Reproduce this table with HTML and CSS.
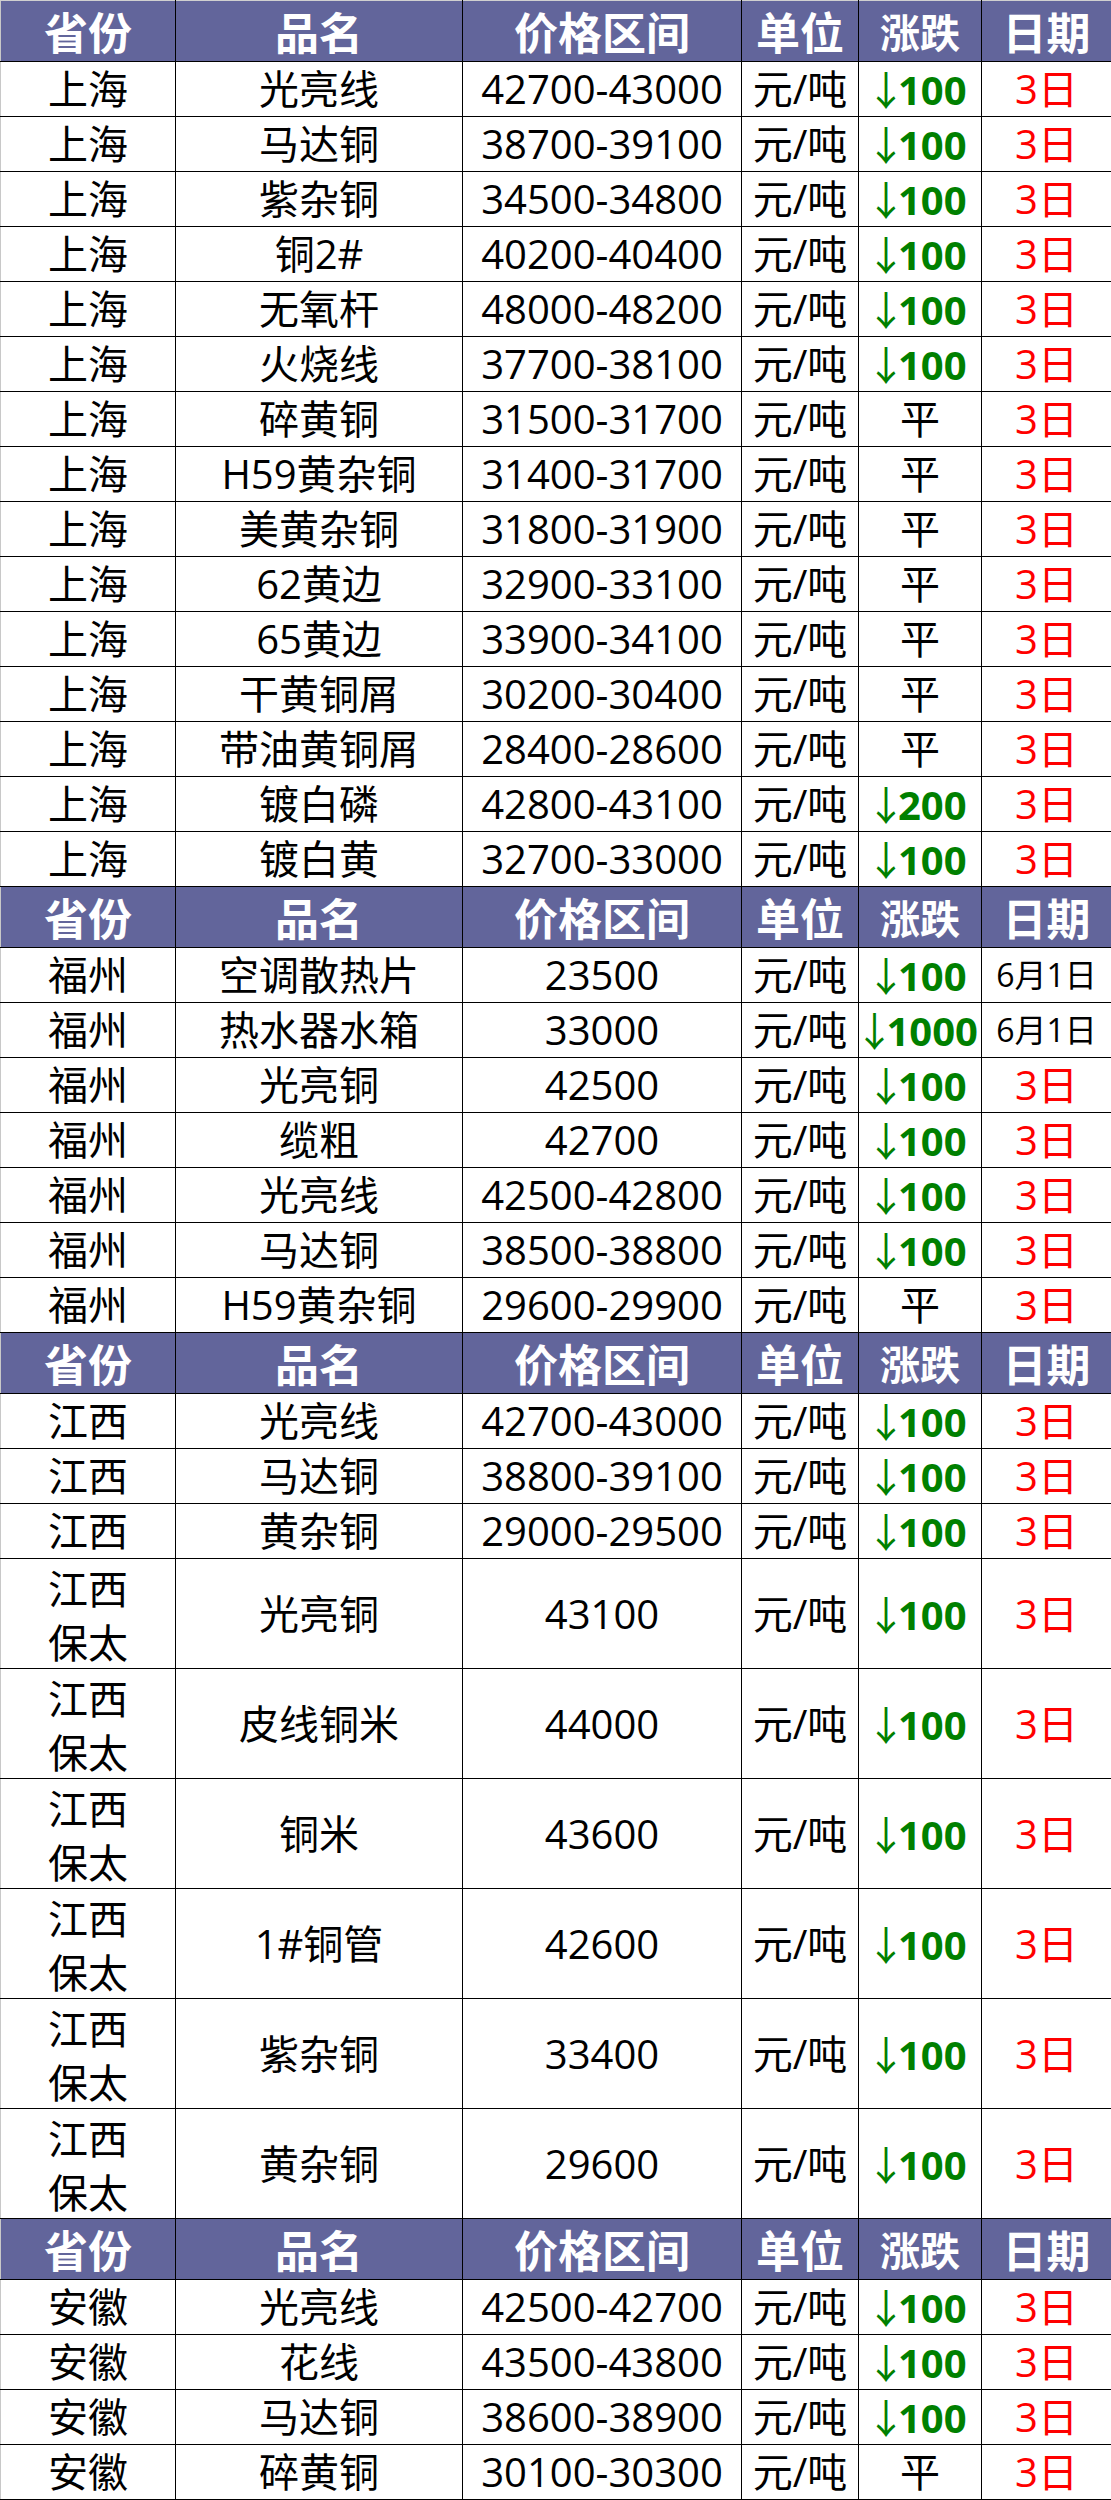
FILE: index.html
```html
<!DOCTYPE html>
<html lang="zh-CN">
<head>
<meta charset="utf-8">
<title>铜价</title>
<link rel="stylesheet" href="styles.css">
</head>
<body>
<table class="price-table">
  <colgroup>
    <col class="c-prov"><col class="c-name"><col class="c-price"><col class="c-unit"><col class="c-chg"><col class="c-date">
  </colgroup>
  <tbody>
    <tr class="head"><th>省份</th><th>品名</th><th>价格区间</th><th>单位</th><th class="h-chg">涨跌</th><th>日期</th></tr>
    <tr><td>上海</td><td>光亮线</td><td>42700-43000</td><td>元/吨</td><td class="down"><span class="arr">↓</span>100</td><td class="red">3日</td></tr>
    <tr><td>上海</td><td>马达铜</td><td>38700-39100</td><td>元/吨</td><td class="down"><span class="arr">↓</span>100</td><td class="red">3日</td></tr>
    <tr><td>上海</td><td>紫杂铜</td><td>34500-34800</td><td>元/吨</td><td class="down"><span class="arr">↓</span>100</td><td class="red">3日</td></tr>
    <tr><td>上海</td><td>铜2#</td><td>40200-40400</td><td>元/吨</td><td class="down"><span class="arr">↓</span>100</td><td class="red">3日</td></tr>
    <tr><td>上海</td><td>无氧杆</td><td>48000-48200</td><td>元/吨</td><td class="down"><span class="arr">↓</span>100</td><td class="red">3日</td></tr>
    <tr><td>上海</td><td>火烧线</td><td>37700-38100</td><td>元/吨</td><td class="down"><span class="arr">↓</span>100</td><td class="red">3日</td></tr>
    <tr><td>上海</td><td>碎黄铜</td><td>31500-31700</td><td>元/吨</td><td>平</td><td class="red">3日</td></tr>
    <tr><td>上海</td><td>H59黄杂铜</td><td>31400-31700</td><td>元/吨</td><td>平</td><td class="red">3日</td></tr>
    <tr><td>上海</td><td>美黄杂铜</td><td>31800-31900</td><td>元/吨</td><td>平</td><td class="red">3日</td></tr>
    <tr><td>上海</td><td>62黄边</td><td>32900-33100</td><td>元/吨</td><td>平</td><td class="red">3日</td></tr>
    <tr><td>上海</td><td>65黄边</td><td>33900-34100</td><td>元/吨</td><td>平</td><td class="red">3日</td></tr>
    <tr><td>上海</td><td>干黄铜屑</td><td>30200-30400</td><td>元/吨</td><td>平</td><td class="red">3日</td></tr>
    <tr><td>上海</td><td>带油黄铜屑</td><td>28400-28600</td><td>元/吨</td><td>平</td><td class="red">3日</td></tr>
    <tr><td>上海</td><td>镀白磷</td><td>42800-43100</td><td>元/吨</td><td class="down"><span class="arr">↓</span>200</td><td class="red">3日</td></tr>
    <tr><td>上海</td><td>镀白黄</td><td>32700-33000</td><td>元/吨</td><td class="down"><span class="arr">↓</span>100</td><td class="red">3日</td></tr>

    <tr class="head"><th>省份</th><th>品名</th><th>价格区间</th><th>单位</th><th class="h-chg">涨跌</th><th>日期</th></tr>
    <tr><td>福州</td><td>空调散热片</td><td>23500</td><td>元/吨</td><td class="down"><span class="arr">↓</span>100</td><td class="small-date">6月1日</td></tr>
    <tr><td>福州</td><td>热水器水箱</td><td>33000</td><td>元/吨</td><td class="down"><span class="arr">↓</span>1000</td><td class="small-date">6月1日</td></tr>
    <tr><td>福州</td><td>光亮铜</td><td>42500</td><td>元/吨</td><td class="down"><span class="arr">↓</span>100</td><td class="red">3日</td></tr>
    <tr><td>福州</td><td>缆粗</td><td>42700</td><td>元/吨</td><td class="down"><span class="arr">↓</span>100</td><td class="red">3日</td></tr>
    <tr><td>福州</td><td>光亮线</td><td>42500-42800</td><td>元/吨</td><td class="down"><span class="arr">↓</span>100</td><td class="red">3日</td></tr>
    <tr><td>福州</td><td>马达铜</td><td>38500-38800</td><td>元/吨</td><td class="down"><span class="arr">↓</span>100</td><td class="red">3日</td></tr>
    <tr><td>福州</td><td>H59黄杂铜</td><td>29600-29900</td><td>元/吨</td><td>平</td><td class="red">3日</td></tr>

    <tr class="head"><th>省份</th><th>品名</th><th>价格区间</th><th>单位</th><th class="h-chg">涨跌</th><th>日期</th></tr>
    <tr><td>江西</td><td>光亮线</td><td>42700-43000</td><td>元/吨</td><td class="down"><span class="arr">↓</span>100</td><td class="red">3日</td></tr>
    <tr><td>江西</td><td>马达铜</td><td>38800-39100</td><td>元/吨</td><td class="down"><span class="arr">↓</span>100</td><td class="red">3日</td></tr>
    <tr><td>江西</td><td>黄杂铜</td><td>29000-29500</td><td>元/吨</td><td class="down"><span class="arr">↓</span>100</td><td class="red">3日</td></tr>
    <tr class="tall"><td class="two-line">江西<br>保太</td><td>光亮铜</td><td>43100</td><td>元/吨</td><td class="down"><span class="arr">↓</span>100</td><td class="red">3日</td></tr>
    <tr class="tall"><td class="two-line">江西<br>保太</td><td>皮线铜米</td><td>44000</td><td>元/吨</td><td class="down"><span class="arr">↓</span>100</td><td class="red">3日</td></tr>
    <tr class="tall"><td class="two-line">江西<br>保太</td><td>铜米</td><td>43600</td><td>元/吨</td><td class="down"><span class="arr">↓</span>100</td><td class="red">3日</td></tr>
    <tr class="tall"><td class="two-line">江西<br>保太</td><td>1#铜管</td><td>42600</td><td>元/吨</td><td class="down"><span class="arr">↓</span>100</td><td class="red">3日</td></tr>
    <tr class="tall"><td class="two-line">江西<br>保太</td><td>紫杂铜</td><td>33400</td><td>元/吨</td><td class="down"><span class="arr">↓</span>100</td><td class="red">3日</td></tr>
    <tr class="tall"><td class="two-line">江西<br>保太</td><td>黄杂铜</td><td>29600</td><td>元/吨</td><td class="down"><span class="arr">↓</span>100</td><td class="red">3日</td></tr>

    <tr class="head"><th>省份</th><th>品名</th><th>价格区间</th><th>单位</th><th class="h-chg">涨跌</th><th>日期</th></tr>
    <tr><td>安徽</td><td>光亮线</td><td>42500-42700</td><td>元/吨</td><td class="down"><span class="arr">↓</span>100</td><td class="red">3日</td></tr>
    <tr><td>安徽</td><td>花线</td><td>43500-43800</td><td>元/吨</td><td class="down"><span class="arr">↓</span>100</td><td class="red">3日</td></tr>
    <tr><td>安徽</td><td>马达铜</td><td>38600-38900</td><td>元/吨</td><td class="down"><span class="arr">↓</span>100</td><td class="red">3日</td></tr>
    <tr><td>安徽</td><td>碎黄铜</td><td>30100-30300</td><td>元/吨</td><td>平</td><td class="red">3日</td></tr>
  </tbody>
</table>
</body>
</html>
```

FILE: styles.css
```css
html, body {
  margin: 0;
  padding: 0;
  background: #ffffff;
}

.price-table {
  width: 1111px;
  table-layout: fixed;
  border-collapse: collapse;
  font-family: "Open Sans", "Noto Sans CJK SC", sans-serif;
  font-size: 40px;
  color: #000;
}

.c-prov { width: 175px; }
.c-name { width: 287px; }
.c-price { width: 279px; }
.c-unit { width: 117px; }
.c-chg { width: 123px; }
.c-date { width: 130px; }

.price-table td,
.price-table th {
  border: 1px solid #000;
  padding: 0;
  text-align: center;
  vertical-align: middle;
  white-space: nowrap;
  line-height: 40px;
  overflow: visible;
}

.price-table td:first-child,
.price-table th:first-child {
  border-left-color: #c8c8c8;
}

.price-table tr {
  height: 55px;
}

.price-table tr.head {
  height: 61px;
}

.price-table tr.head th {
  background: #62659b;
  color: #ffffff;
  font-family: "Noto Sans CJK SC", sans-serif;
  font-weight: 700;
  font-size: 44px;
  line-height: 48px;
}

.price-table tr.head th.h-chg {
  font-size: 40px;
}

.price-table tr:first-child th {
  border-top-color: #d0d0d0;
}

.price-table tr.tall {
  height: 110px;
}

.price-table td.two-line {
  font-family: "Noto Sans CJK SC", sans-serif;
  line-height: 54px;
}

.price-table td.down {
  color: #008000;
  font-weight: 700;
  padding-left: 2px;
}

.arr {
  font-family: "Noto Sans CJK SC", sans-serif;
  font-weight: 400;
  margin-left: -0.24em;
  letter-spacing: -0.2em;
}

.red {
  color: #ff0000;
}

.small-date {
  font-size: 32px;
}
```
